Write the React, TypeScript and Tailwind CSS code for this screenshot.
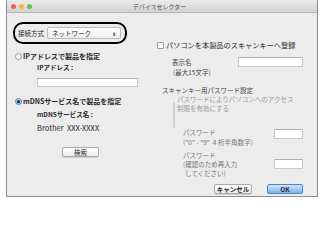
import React from 'react';

const jp = { fontFamily: '"Noto Sans CJK JP", "Liberation Sans", sans-serif' };

const Radio: React.FC<{ checked?: boolean }> = ({ checked }) =>
  checked ? (
    <span className="flex h-[7px] w-[7px] shrink-0 items-center justify-center rounded-full border border-[#4f84c4] bg-gradient-to-b from-[#cfe3f8] to-[#7fb0e6]">
      <span className="h-[3px] w-[3px] rounded-full bg-[#1d2a3a]" />
    </span>
  ) : (
    <span className="h-[7px] w-[7px] shrink-0 rounded-full border border-[#9a9a9a] bg-white" />
  );

const Checkbox: React.FC<{ disabled?: boolean }> = ({ disabled }) => (
  <span
    className={`h-[7px] w-[7px] shrink-0 rounded-[1px] border ${
      disabled ? 'border-[#cfcfcf] bg-[#f4f4f4]' : 'border-[#9a9a9a] bg-white'
    }`}
  />
);

const Field: React.FC<{ className: string }> = ({ className }) => (
  <div className={`border border-[#c8c8c8] border-t-[#b0b0b0] bg-white ${className}`} />
);

export default function App() {
  return (
    <div className="h-[245px] w-[325px] bg-white text-[#2b2b2b]" style={jp}>
      <div className="ml-[6px] flex h-[197px] w-[312px] flex-col border-x border-b border-[#8c8c8c] bg-[#ececec]">
        {/* title bar */}
        <div className="flex h-[13px] items-center border-b border-[#b4b4b4] bg-gradient-to-b from-[#ececec] to-[#d2d2d2]">
          <div className="ml-[4px] flex gap-[3px]">
            <span className="h-[5px] w-[5px] rounded-full bg-[#f2605a]" />
            <span className="h-[5px] w-[5px] rounded-full bg-[#f5b73a]" />
            <span className="h-[5px] w-[5px] rounded-full bg-[#5ec34c]" />
          </div>
          <div className="flex-1 pr-[30px] text-center text-[6px] leading-[13px] text-[#4a4a4a]">
            デバイスセレクター
          </div>
        </div>

        <div className="flex flex-1">
          {/* left column */}
          <div className="flex w-[148px] flex-col">
            <div className="ml-[6px] mt-[9px] flex h-[22px] w-[114px] items-center rounded-[10px] border-2 border-black pl-[3px]">
              <span className="text-[6.5px] leading-[10px]">接続方式</span>
              <div className="ml-[3px] flex h-[12px] w-[74px] items-center justify-between rounded-[2px] border border-[#bcbcbc] bg-gradient-to-b from-white to-[#ededed] pl-[4px] pr-[4px]">
                <span className="text-[6.5px] leading-[10px]">ネットワーク</span>
                <span className="text-[5px] leading-[5px] text-[#444]">⬍</span>
              </div>
            </div>

            <div className="ml-[8px] mt-[7px] flex h-[10px] items-center gap-[1px]">
              <Radio />
              <span className="text-[7px] font-bold leading-[10px]">IPアドレスで製品を指定</span>
            </div>
            <div className="ml-[30px] mt-[1px] h-[10px] text-[6.5px] font-bold leading-[10px]">IPアドレス :</div>
            <Field className="ml-[30px] mt-[6px] h-[9px] w-[101px]" />

            <div className="ml-[8px] mt-[9px] flex h-[10px] items-center gap-[1px]">
              <Radio checked />
              <span className="text-[7px] font-bold leading-[10px]">mDNSサービス名で製品を指定</span>
            </div>
            <div className="ml-[30px] mt-[3px] h-[10px] text-[6.5px] font-bold leading-[10px]">mDNSサービス名 :</div>
            <div className="ml-[30px] mt-[4px] h-[10px] whitespace-pre text-[7.5px] leading-[10px]">
              {'Brother  XXX-XXXX'}
            </div>
            <button className="ml-[55px] mt-[14px] flex h-[10px] w-[37px] items-center justify-center rounded-[2px] border border-[#a9a9a9] bg-gradient-to-b from-white to-[#ebebeb] text-[6.5px] leading-[10px] shadow-[0_1px_0_#d0d0d0]">
              検索
            </button>
          </div>

          {/* right column */}
          <div className="flex flex-1 flex-col pr-[14px]">
            <div className="ml-[2px] mt-[27px] flex h-[10px] items-center gap-[2px]">
              <Checkbox />
              <span className="text-[7.2px] leading-[10px]">パソコンを本製品のスキャンキーへ登録</span>
            </div>

            <div className="mt-[7px] flex items-start justify-between">
              <div className="ml-[17px] flex flex-col text-[6.5px] leading-[10px] text-[#444]">
                <span>表示名</span>
                <span className="ml-[1px]">(最大15文字)</span>
              </div>
              <Field className="h-[10px] w-[65px]" />
            </div>

            <div className="ml-[7px] mt-[8px] h-[10px] text-[6.5px] leading-[10px] text-[#444]">
              スキャンキー用パスワード設定
            </div>

            <div className="ml-[18px] flex items-start gap-[2px]">
              <span className="mt-[8px]">
                <Checkbox disabled />
              </span>
              <div className="flex flex-col text-[6.5px] leading-[9px] text-[#9b9b9b]">
                <span>パスワードによりパソコンへのアクセス</span>
                <span>制限を有効にする</span>
              </div>
            </div>

            <div className="flex items-start justify-between">
              <div className="ml-[28px] flex flex-col text-[6.5px] leading-[10px] text-[#777]">
                <span>パスワード</span>
                <span>("0" - "9"&nbsp;&nbsp;4 桁半角数字)</span>
              </div>
              <Field className="mt-[2px] h-[10px] w-[29px]" />
            </div>

            <div className="mt-[4px] flex items-start justify-between">
              <div className="ml-[28px] flex flex-col text-[6.5px] leading-[9px] text-[#777]">
                <span>パスワード</span>
                <span>(確認のため再入力</span>
                <span className="ml-[2px]">してください)</span>
              </div>
              <Field className="mt-[8px] h-[10px] w-[29px]" />
            </div>

            <div className="mt-[6px] flex justify-end gap-[15px]">
              <button className="flex h-[10px] w-[38px] items-center justify-center rounded-[2px] border border-[#a9a9a9] bg-gradient-to-b from-white to-[#ebebeb] text-[6.5px] font-bold leading-[10px] shadow-[0_1px_0_#d0d0d0]">
                キャンセル
              </button>
              <button className="flex h-[10px] w-[36px] items-center justify-center rounded-[2px] border border-[#4f84c4] bg-gradient-to-b from-[#d2e6fb] to-[#7cb2ec] text-[6.5px] font-bold leading-[10px] text-[#1b2a40]">
                OK
              </button>
            </div>
          </div>
        </div>
      </div>
    </div>
  );
}
